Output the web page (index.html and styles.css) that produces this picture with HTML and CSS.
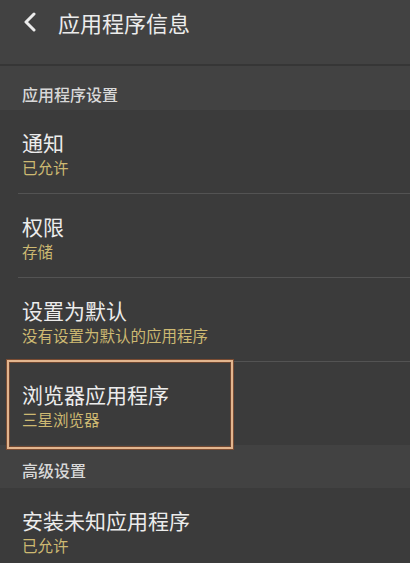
FILE: index.html
```html
<!DOCTYPE html>
<html lang="zh-CN">
<head>
<meta charset="utf-8">
<title>应用程序信息</title>
<link rel="stylesheet" href="styles.css">
</head>
<body>
<div class="screen">
  <header class="topbar">
    <svg class="back" width="16" height="20" viewBox="0 0 16 20" aria-hidden="true">
      <polyline points="12,2 4,10 12,18" fill="none" stroke="#ececec" stroke-width="3" stroke-linecap="round" stroke-linejoin="round"/>
    </svg>
    <h1 class="title">应用程序信息</h1>
  </header>
  <div class="section">应用程序设置</div>
  <div class="list">
    <div class="item">
      <div class="item-title">通知</div>
      <div class="item-sub">已允许</div>
    </div>
    <div class="divider"></div>
    <div class="item">
      <div class="item-title">权限</div>
      <div class="item-sub">存储</div>
    </div>
    <div class="divider"></div>
    <div class="item">
      <div class="item-title">设置为默认</div>
      <div class="item-sub">没有设置为默认的应用程序</div>
    </div>
    <div class="divider"></div>
    <div class="item highlighted">
      <div class="item-title">浏览器应用程序</div>
      <div class="item-sub">三星浏览器</div>
      <div class="mark"></div>
    </div>
  </div>
  <div class="section section-2">高级设置</div>
  <div class="list">
    <div class="item">
      <div class="item-title">安装未知应用程序</div>
      <div class="item-sub">已允许</div>
    </div>
  </div>
</div>
</body>
</html>
```

FILE: styles.css
```css
* { box-sizing: border-box; }
html, body {
  margin: 0;
  padding: 0;
  background: #3b3b3b;
}
body {
  font-family: "Noto Sans CJK SC", "Noto Sans", sans-serif;
  width: 410px;
  height: 563px;
  overflow: hidden;
}
.screen {
  display: flex;
  flex-direction: column;
}
.topbar {
  height: 66px;
  background: #424242;
  display: flex;
  align-items: flex-start;
  padding: 11px 0 0 22px;
  border-bottom: 2px solid #363636;
}
.back {
  margin-top: 1px;
  width: 16px;
  height: 20px;
}
.title {
  margin: 0 0 0 20px;
  font-size: 22px;
  line-height: 22px;
  font-weight: 400;
  color: #ececec;
}
.section {
  background: #424242;
  color: #d8d8d8;
  font-size: 16px;
  font-weight: 500;
  line-height: 20px;
  padding: 18px 0 6px 22px;
  height: 44px;
}
.section-2 {
  padding-top: 15px;
  height: 43px;
  padding-bottom: 8px;
}
.list {
  background: #3b3b3b;
  display: flex;
  flex-direction: column;
}
.item {
  position: relative;
  height: 83px;
  padding: 20px 0 0 22px;
}
.item-title {
  font-size: 21px;
  line-height: 24px;
  color: #ececec;
}
.item-sub {
  margin-top: 3px;
  font-size: 15.5px;
  line-height: 20px;
  color: #cdb972;
}
.divider {
  height: 1px;
  margin-left: 18px;
  background: #535353;
}
.mark {
  position: absolute;
  left: 7px;
  top: -2px;
  width: 226px;
  height: 89px;
  border: 2px solid #e2b58e;
  box-shadow: 0 0 0 1px #7a4c32, inset 0 0 0 1px #6e4630;
  pointer-events: none;
}
```
